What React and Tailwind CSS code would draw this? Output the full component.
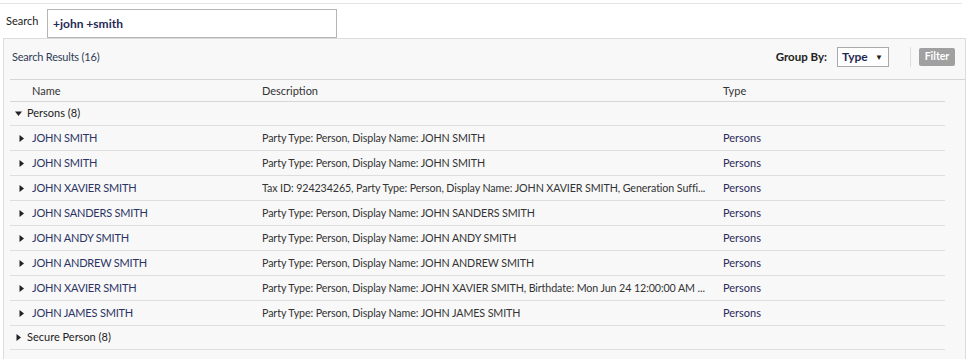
import React from 'react';

const rows = [
  { name: 'JOHN SMITH', desc: 'Party Type: Person, Display Name: JOHN SMITH' },
  { name: 'JOHN SMITH', desc: 'Party Type: Person, Display Name: JOHN SMITH' },
  { name: 'JOHN XAVIER SMITH', desc: 'Tax ID: 924234265, Party Type: Person, Display Name: JOHN XAVIER SMITH, Generation Suffi...' },
  { name: 'JOHN SANDERS SMITH', desc: 'Party Type: Person, Display Name: JOHN SANDERS SMITH' },
  { name: 'JOHN ANDY SMITH', desc: 'Party Type: Person, Display Name: JOHN ANDY SMITH' },
  { name: 'JOHN ANDREW SMITH', desc: 'Party Type: Person, Display Name: JOHN ANDREW SMITH' },
  { name: 'JOHN XAVIER SMITH', desc: 'Party Type: Person, Display Name: JOHN XAVIER SMITH, Birthdate: Mon Jun 24 12:00:00 AM ...' },
  { name: 'JOHN JAMES SMITH', desc: 'Party Type: Person, Display Name: JOHN JAMES SMITH' },
];

const Caret = ({ open }) => (
  <svg width="7" height="7" viewBox="0 0 7 7" className="shrink-0">
    {open ? <path d="M0 1.5 L7 1.5 L3.5 6 Z" fill="#222" /> : <path d="M1.5 0 L6 3.5 L1.5 7 Z" fill="#222" />}
  </svg>
);

const App = () => {
  return (
    <div className="w-[979px] h-[359px] bg-white overflow-hidden font-['Lato',sans-serif] text-[11px] text-[#333]">
      <div className="pt-[3px]">
        <div className="border-t border-[#e4e4e4] mr-[17px]" />
      </div>

      <div className="flex items-start h-[34px] pt-[5px]">
        <span className="ml-[6px] mt-[4px] w-[41px] text-[11px] text-[#222]">Search</span>
        <div className="w-[290px] h-[29px] border border-[#b5b5b5] bg-white flex items-center pl-[5px]">
          <span className="font-bold text-[12px] text-[#1f2a55]">+john +smith</span>
        </div>
      </div>

      <div className="ml-[3px] w-[963px] h-[330px] border-t border-l border-r border-[#dcdcdc] bg-[#f8f8f8]">
        <div className="flex items-center h-[40px] pb-[4px] pl-[8px]">
          <span className="text-[#2e3c55] tracking-[-0.2px]">Search Results (16)</span>
          <div className="flex-1" />
          <span className="font-bold text-[#222] text-[11.5px] mr-[10px]">Group By:</span>
          <div className="w-[52px] h-[20px] border border-[#aaa] bg-white flex items-center pl-[4px] pr-[5px]">
            <span className="font-bold text-[12px] text-[#1f2a55]">Type</span>
            <div className="flex-1" />
            <span className="text-[8px] text-[#222]">▼</span>
          </div>
          <div className="w-px h-[20px] bg-[#dedede] ml-[21px]" />
          <div className="ml-[8px] mr-[10px] w-[36px] h-[18px] rounded-[2px] bg-[#a0a0a0] flex items-center justify-center text-white font-bold text-[10.5px]">
            Filter
          </div>
        </div>

        <div className="ml-[6px] border-t border-[#d6d6d6]" />

        <div className="ml-[6px] mr-[20px]">
          <div className="flex items-center h-[22px] pt-[2px] border-b border-[#d6d6d6] text-[#333]">
            <span className="w-[252px] pl-[22px]">Name</span>
            <span className="w-[461px]">Description</span>
            <span>Type</span>
          </div>

          <div className="flex items-center h-[24px] border-b border-[#dedede] pl-[5px] gap-[5px] text-[#222]">
            <Caret open />
            <span>Persons (8)</span>
          </div>

          {rows.map((r, i) => (
            <div key={i} className="flex items-center h-[25px] border-b border-[#dedede]">
              <div className="w-[252px] flex items-center pl-[8px] gap-[7px]">
                <Caret />
                <span className="text-[#2b3464] tracking-[-0.2px]">{r.name}</span>
              </div>
              <span className="w-[461px] whitespace-nowrap overflow-hidden text-[10.7px] tracking-[-0.1px] text-[#333]">{r.desc}</span>
              <span className="text-[#2b2a5a]">Persons</span>
            </div>
          ))}

          <div className="flex items-center h-[24px] border-b border-[#dedede] pl-[5px] gap-[5px] text-[#222]">
            <Caret />
            <span>Secure Person (8)</span>
          </div>
        </div>
      </div>
    </div>
  );
};

export default App;
